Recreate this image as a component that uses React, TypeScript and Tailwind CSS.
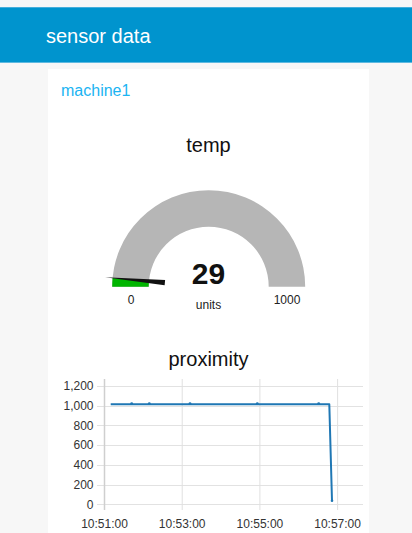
const FONT = { fontFamily: '"Liberation Sans", Arial, sans-serif' }

const Y_TICKS = [1200, 1000, 800, 600, 400, 200, 0]
const X_TICKS = [
  { x: 56.5, label: '10:51:00' },
  { x: 134.2, label: '10:53:00' },
  { x: 211.9, label: '10:55:00' },
  { x: 289.6, label: '10:57:00' },
]
const Y0 = 135.2
const YSTEP = 19.7
const POINTS = [62.7, 83.7, 101.3, 142, 209.3, 270.7]

function Gauge() {
  return (
    <svg width={321} height={197} viewBox="0 0 321 197" className="block" style={FONT}>
      <path
        d="M64.2,134.7 A96.5,96.5 0 0 1 257.2,134.7 L220.7,134.7 A60,60 0 0 0 100.7,134.7 Z"
        fill="#b6b6b6"
      />
      <path
        d="M64.2,134.7 A96.5,96.5 0 0 1 64.6,125.92 L100.95,129.24 A60,60 0 0 0 100.7,134.7 Z"
        fill="#00b500"
      />
      <polygon points="-104,0 -44,-2.6 -44,2.6" fill="#111" transform="translate(160.7 134.7) rotate(5.22)" />
      <text x={160.5} y={132} textAnchor="middle" fontSize={30} fontWeight="bold" fill="#111">
        29
      </text>
      <text x={83} y={152} textAnchor="middle" fontSize={12} fill="#222">
        0
      </text>
      <text x={239} y={152} textAnchor="middle" fontSize={12} fill="#222">
        1000
      </text>
      <text x={160.5} y={157} textAnchor="middle" fontSize={12} fill="#222">
        units
      </text>
    </svg>
  )
}

function ProximityChart() {
  return (
    <svg width={321} height={171} viewBox="0 0 321 171" className="block" style={FONT}>
      {Y_TICKS.map((v, i) => {
        const y = Math.round(17 + i * YSTEP) + 0.5
        return (
          <g key={v}>
            <line x1={49} x2={315} y1={y} y2={y} stroke="#e2e2e2" strokeWidth={1} />
            <text x={45.5} y={17 + i * YSTEP + 4.3} textAnchor="end" fontSize={12} fill="#333">
              {v.toLocaleString('en-US')}
            </text>
          </g>
        )
      })}
      {X_TICKS.map((t, i) => (
        <g key={t.label}>
          <line
            x1={t.x}
            x2={t.x}
            y1={10}
            y2={141}
            stroke={i === 0 ? '#cfcfcf' : '#e0e0e0'}
            strokeWidth={i === 0 ? 1.5 : 1}
          />
          <text x={t.x} y={158.5} textAnchor="middle" fontSize={12} fill="#333">
            {t.label}
          </text>
        </g>
      ))}
      <path
        d={`M62.7,35.3 L281.3,35.3 L284,${Y0 - 3.5}`}
        fill="none"
        stroke="#1f77b4"
        strokeWidth={2}
        strokeLinejoin="round"
      />
      {POINTS.slice(1).map((x) => (
        <circle key={x} cx={x} cy={34.6} r={1.4} fill="#1f77b4" />
      ))}
      <circle cx={284} cy={Y0 - 3.5} r={1.3} fill="#1f77b4" />
    </svg>
  )
}

export default function App() {
  return (
    <div className="min-h-screen w-[412px] bg-[#f7f7f7] overflow-hidden" style={FONT}>
      <div className="h-[7px] bg-[#f7f7f7]" />
      <header className="h-[56px] bg-[#0094ce] border-t border-[#45aedb] border-b border-b-[#5fb9e0] pl-[46px] pt-[18px]">
        <h1 className="text-[20px] leading-[20px] text-white font-normal">sensor data</h1>
      </header>
      <main className="ml-[48px] mt-[6px] w-[321px] bg-white flex flex-col pb-6">
        <div className="pl-[13px] pt-[14px] text-[16px] leading-[16px] text-[#1bb4f2]">machine1</div>
        <div className="mt-[33px] h-[20px] pt-[3px] text-center text-[20px] leading-[20px] text-[#111]">temp</div>
        <Gauge />
        <div className="text-center text-[20px] leading-[20px] text-[#111]">proximity</div>
        <ProximityChart />
      </main>
    </div>
  )
}
